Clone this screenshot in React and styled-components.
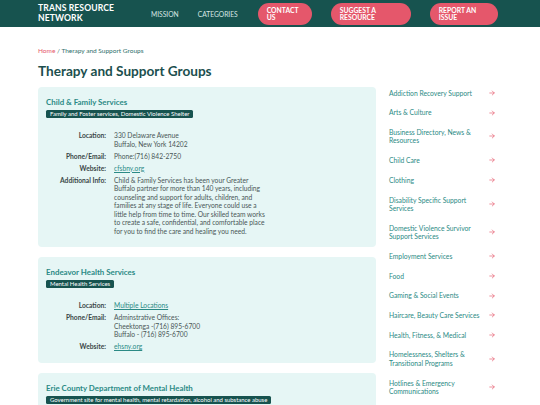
import React from 'react';
import styled, { createGlobalStyle } from 'styled-components';

const GlobalStyle = createGlobalStyle`
  body {
    margin: 0;
    background: #ffffff;
    font-family: Lato, "Open Sans", sans-serif;
  }
`;

const Header = styled.header`
  background: #17534f;
  height: 27px;
`;

const HeaderInner = styled.div`
  width: 464px;
  margin: 0 auto;
  height: 100%;
  display: flex;
  align-items: center;
`;

const Logo = styled.div`
  color: #ffffff;
  font-weight: 700;
  font-size: 8.6px;
  line-height: 9.5px;
  letter-spacing: 0.1px;
  width: 113px;
`;

const Nav = styled.nav`
  display: flex;
  align-items: center;
  gap: 19px;
`;

const NavLink = styled.a`
  color: #d6e6e3;
  font-size: 6.7px;
  font-weight: 400;
  text-decoration: none;
`;

const Buttons = styled.div`
  display: flex;
  gap: 19px;
  margin-left: 20px;
`;

const PillButton = styled.a`
  display: flex;
  align-items: center;
  box-sizing: border-box;
  width: ${p => p.$w}px;
  height: 22px;
  padding: 0 9px;
  border-radius: 11px;
  background: #e5576b;
  color: #ffffff;
  font-size: 6.8px;
  font-weight: 700;
  line-height: 7px;
  text-transform: uppercase;
`;

const Container = styled.main`
  width: 464px;
  margin: 0 auto;
  padding-top: 20px;
`;

const Breadcrumb = styled.div`
  font-size: 6.5px;
  color: #2f6f6b;
  line-height: 8px;
`;

const Crumb = styled.a`
  color: #e5576b;
  text-decoration: none;
`;

const Title = styled.h1`
  margin: 7px 0 0;
  font-size: 13.6px;
  line-height: 18px;
  font-weight: 700;
  color: #1c4f4e;
`;

const Columns = styled.div`
  display: flex;
  gap: 13px;
  margin-top: 7px;
  align-items: flex-start;
`;

const Cards = styled.div`
  width: 338px;
  display: flex;
  flex-direction: column;
  gap: 10px;
`;

const Card = styled.section`
  background: #e6f6f5;
  border-radius: 4px;
  padding: 10px 8px 12px;
`;

const CardTitle = styled.h2`
  margin: 0;
  font-size: 7.9px;
  line-height: 10px;
  font-weight: 700;
  color: #2b8a85;
`;

const Tag = styled.span`
  display: block;
  width: fit-content;
  margin-top: 3px;
  background: #17534f;
  color: #ffffff;
  border-radius: 1.5px;
  font-size: 5.95px;
  line-height: 8px;
  padding: 0 4px;
`;

const Details = styled.dl`
  display: grid;
  grid-template-columns: 60px 154px;
  column-gap: 8px;
  row-gap: 3.5px;
  margin: 13px 0 0;
  font-size: 6.7px;
  line-height: 8.5px;
  color: #4a5757;
`;

const Label = styled.dt`
  text-align: right;
  font-weight: 700;
  color: #3a4747;
`;

const Value = styled.dd`
  margin: 0;
`;

const ValueLink = styled.a`
  color: #2b8a85;
  text-decoration: underline;
`;

const Sidebar = styled.aside`
  width: 113px;
  margin-top: -4px;
`;

const SideItem = styled.a`
  display: flex;
  align-items: center;
  justify-content: space-between;
  padding: 5.6px 0;
  text-decoration: none;
`;

const SideText = styled.span`
  max-width: 95px;
  font-size: 6.75px;
  line-height: 8.5px;
  color: #2b8a85;
`;

const Arrow = styled.svg`
  width: 6px;
  height: 6px;
  flex: none;
  margin-right: 7px;
`;

const cards = [
  {
    name: 'Child & Family Services',
    tag: 'Family and Foster services, Domestic Violence Shelter',
    rows: [
      ['Location:', ['330 Delaware Avenue', 'Buffalo, New York 14202']],
      ['Phone/Email:', ['Phone:(716) 842-2750']],
      ['Website:', 'cfsbny.org', true],
      ['Additional Info:', ['Child & Family Services has been your Greater Buffalo partner for more than 140 years, including counseling and support for adults, children, and families at any stage of life. Everyone could use a little help from time to time. Our skilled team works to create a safe, confidential, and comfortable place for you to find the care and healing you need.']],
    ],
  },
  {
    name: 'Endeavor Health Services',
    tag: 'Mental Health Services',
    rows: [
      ['Location:', 'Multiple Locations', true],
      ['Phone/Email:', ['Adminstrative Offices:', 'Cheektonga -(716) 895-6700', 'Buffalo - (716) 895-6700']],
      ['Website:', 'ehsny.org', true],
    ],
  },
  {
    name: 'Erie County Department of Mental Health',
    tag: 'Government site for mental health, mental retardation, alcohol and substance abuse',
    rows: [
      ['Location:', ['95 Franklin Street', 'Buffalo, New York 14202']],
    ],
  },
];

const categories = [
  'Addiction Recovery Support',
  'Arts & Culture',
  'Business Directory, News & Resources',
  'Child Care',
  'Clothing',
  'Disability Specific Support Services',
  'Domestic Violence Survivor Support Services',
  'Employment Services',
  'Food',
  'Gaming & Social Events',
  'Haircare, Beauty Care Services',
  'Health, Fitness, & Medical',
  'Homelessness, Shelters & Transitional Programs',
  'Hotlines & Emergency Communications',
  'Legal Services',
];

const ArrowIcon = () => (
  <Arrow viewBox="0 0 12 12" fill="none" stroke="#e5576b" strokeWidth="1.3" strokeLinecap="round" strokeLinejoin="round">
    <path d="M1.5 6h9M6.5 2l4 4-4 4" />
  </Arrow>
);

const App = () => (
  <>
    <GlobalStyle />
    <Header>
      <HeaderInner>
        <Logo>TRANS RESOURCE<br />NETWORK</Logo>
        <Nav>
          <NavLink>MISSION</NavLink>
          <NavLink>CATEGORIES</NavLink>
        </Nav>
        <Buttons>
          <PillButton $w={54}>Contact<br />Us</PillButton>
          <PillButton $w={80}>Suggest a<br />Resource</PillButton>
          <PillButton $w={68}>Report an<br />Issue</PillButton>
        </Buttons>
      </HeaderInner>
    </Header>

    <Container>
      <Breadcrumb>
        <Crumb>Home</Crumb> / Therapy and Support Groups
      </Breadcrumb>
      <Title>Therapy and Support Groups</Title>

      <Columns>
        <Cards>
          {cards.map(card => (
            <Card key={card.name}>
              <CardTitle>{card.name}</CardTitle>
              <Tag>{card.tag}</Tag>
              <Details>
                {card.rows.map(([label, value, isLink]) => (
                  <React.Fragment key={label}>
                    <Label>{label}</Label>
                    <Value>
                      {isLink
                        ? <ValueLink>{value}</ValueLink>
                        : value.map((line, i) => <div key={i}>{line}</div>)}
                    </Value>
                  </React.Fragment>
                ))}
              </Details>
            </Card>
          ))}
        </Cards>

        <Sidebar>
          {categories.map(c => (
            <SideItem key={c}>
              <SideText>{c}</SideText>
              <ArrowIcon />
            </SideItem>
          ))}
        </Sidebar>
      </Columns>
    </Container>
  </>
);

export default App;
